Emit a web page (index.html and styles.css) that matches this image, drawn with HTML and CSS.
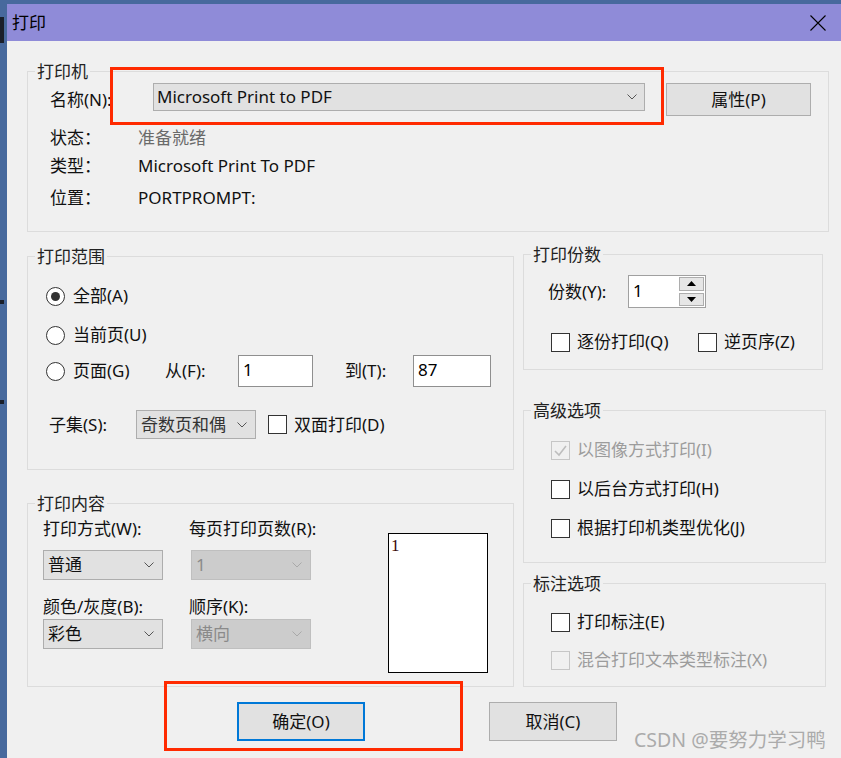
FILE: index.html
```html
<!DOCTYPE html>
<html lang="zh-CN">
<head>
<meta charset="utf-8">
<title>打印</title>
<link rel="stylesheet" href="styles.css">
</head>
<body>
<div class="desktop">
  <div class="dialog">
    <div class="titlebar">
      <span class="title">打印</span>
      <svg class="close" viewBox="0 0 16 16"><path d="M0.5 0.5 L15.5 15.5 M15.5 0.5 L0.5 15.5" stroke="#000" stroke-width="1.1" fill="none"/></svg>
    </div>
    <div class="content">
      <fieldset class="grp grp-printer">
        <legend>打印机</legend>
        <div class="printer-body">
          <div class="name-row">
            <span class="name-label">名称(N):</span>
            <div class="select select-printer">
              <span class="sel-text">Microsoft Print to PDF</span>
              <svg class="chev" viewBox="0 0 10 6"><path d="M0.5 0.5 L5 5 L9.5 0.5" fill="none" stroke="#555" stroke-width="1"/></svg>
            </div>
            <div class="btn btn-props">属性(P)</div>
          </div>
          <div class="info">
            <span>状态：</span><span class="muted">准备就绪</span>
            <span>类型：</span><span>Microsoft Print To PDF</span>
            <span>位置：</span><span>PORTPROMPT:</span>
          </div>
        </div>
      </fieldset>

      <div class="columns">
        <div class="col col-left">
          <fieldset class="grp grp-range">
            <legend>打印范围</legend>
            <div class="range-body">
              <div class="radio-row"><span class="radio on"></span><span>全部(A)</span></div>
              <div class="radio-row row-u"><span class="radio"></span><span>当前页(U)</span></div>
              <div class="radio-row row-g">
                <div class="pg-radio"><span class="radio"></span><span>页面(G)</span></div>
                <span class="lbl-from">从(F):</span>
                <div class="txt txt-from">1</div>
                <span class="lbl-to">到(T):</span>
                <div class="txt txt-to">87</div>
              </div>
              <div class="subset-row">
                <span class="subset-label">子集(S):</span>
                <div class="select select-subset">
                  <span class="sel-text subset-text">奇数页和偶</span>
                  <svg class="chev" viewBox="0 0 10 6"><path d="M0.5 0.5 L5 5 L9.5 0.5" fill="none" stroke="#555" stroke-width="1"/></svg>
                </div>
                <span class="cb cb-duplex"></span>
                <span class="cb-label">双面打印(D)</span>
              </div>
            </div>
          </fieldset>

          <fieldset class="grp grp-content">
            <legend>打印内容</legend>
            <div class="content-body">
              <div class="fields">
                <div class="field">
                  <div class="field-label">打印方式(W):</div>
                  <div class="select select-small">
                    <span class="sel-text">普通</span>
                    <svg class="chev" viewBox="0 0 10 6"><path d="M0.5 0.5 L5 5 L9.5 0.5" fill="none" stroke="#555" stroke-width="1"/></svg>
                  </div>
                </div>
                <div class="field">
                  <div class="field-label col2">每页打印页数(R):</div>
                  <div class="select select-small disabled">
                    <span class="sel-text">1</span>
                    <svg class="chev" viewBox="0 0 10 6"><path d="M0.5 0.5 L5 5 L9.5 0.5" fill="none" stroke="#a9a9a9" stroke-width="1"/></svg>
                  </div>
                </div>
                <div class="field field-2">
                  <div class="field-label">颜色/灰度(B):</div>
                  <div class="select select-small">
                    <span class="sel-text">彩色</span>
                    <svg class="chev" viewBox="0 0 10 6"><path d="M0.5 0.5 L5 5 L9.5 0.5" fill="none" stroke="#555" stroke-width="1"/></svg>
                  </div>
                </div>
                <div class="field field-2">
                  <div class="field-label col2">顺序(K):</div>
                  <div class="select select-small disabled">
                    <span class="sel-text">横向</span>
                    <svg class="chev" viewBox="0 0 10 6"><path d="M0.5 0.5 L5 5 L9.5 0.5" fill="none" stroke="#a9a9a9" stroke-width="1"/></svg>
                  </div>
                </div>
              </div>
              <div class="preview"><span class="preview-num">1</span></div>
            </div>
          </fieldset>
        </div>

        <div class="col col-right">
          <fieldset class="grp grp-copies">
            <legend>打印份数</legend>
            <div class="copies-body">
              <div class="copies-row">
                <span class="copies-label">份数(Y):</span>
                <div class="spin-input">
                  <span class="val">1</span>
                  <div class="spin">
                    <div class="spin-btn"><svg viewBox="0 0 9 5" class="arrow"><path d="M0 5 L4.5 0 L9 5 Z" fill="#000"/></svg></div>
                    <div class="spin-btn"><svg viewBox="0 0 9 5" class="arrow"><path d="M0 0 L4.5 5 L9 0 Z" fill="#000"/></svg></div>
                  </div>
                </div>
              </div>
              <div class="check-row copies-checks">
                <div class="check-item collate"><span class="cb"></span><span class="cb-label">逐份打印(Q)</span></div>
                <div class="check-item"><span class="cb"></span><span class="cb-label">逆页序(Z)</span></div>
              </div>
            </div>
          </fieldset>

          <fieldset class="grp grp-adv">
            <legend>高级选项</legend>
            <div class="opt-body adv-body">
              <div class="check-item dis-item">
                <span class="cb dis"><svg viewBox="0 0 17 17" class="tick"><path d="M3 9 L7 13 L14 4" stroke="#bdbdbd" stroke-width="1.6" fill="none"/></svg></span>
                <span class="cb-label">以图像方式打印(I)</span>
              </div>
              <div class="check-item"><span class="cb"></span><span class="cb-label">以后台方式打印(H)</span></div>
              <div class="check-item"><span class="cb"></span><span class="cb-label">根据打印机类型优化(J)</span></div>
            </div>
          </fieldset>

          <fieldset class="grp grp-anno">
            <legend>标注选项</legend>
            <div class="opt-body anno-body">
              <div class="check-item"><span class="cb"></span><span class="cb-label">打印标注(E)</span></div>
              <div class="check-item dis-item"><span class="cb dis"></span><span class="cb-label">混合打印文本类型标注(X)</span></div>
            </div>
          </fieldset>
        </div>
      </div>

      <div class="buttons">
        <div class="btn btn-dlg btn-ok">确定(O)</div>
        <div class="btn btn-dlg">取消(C)</div>
      </div>

      <div class="mark mark-printer"></div>
      <div class="mark mark-ok"></div>
      <div class="watermark">CSDN @要努力学习鸭</div>
    </div>
  </div>
</div>
</body>
</html>
```

FILE: styles.css
```css
* { box-sizing: border-box; }

html, body {
  margin: 0;
  padding: 0;
}

body {
  width: 841px;
  height: 758px;
  overflow: hidden;
  background: #47699d;
  font-family: "Noto Sans", "Noto Sans CJK SC", sans-serif;
  font-size: 17px;
  line-height: 22px;
  color: #111;
}

.desktop {
  width: 841px;
  height: 758px;
  padding: 4px 0 0 7px;
  background:
    linear-gradient(180deg, transparent 0 17px, #1a1f2a 17px 43px, transparent 43px 300px, #1a1f2a 300px 304px, transparent 304px 400px, #1a1f2a 400px 404px, transparent 404px),
    #47699d;
  background-size: 4px 100%, auto;
  background-repeat: no-repeat;
}

.dialog {
  width: 834px;
  height: 754px;
  background: #f0f0f0;
  display: flex;
  flex-direction: column;
}

.titlebar {
  flex: none;
  height: 37px;
  background: #8f8bd8;
  display: flex;
  align-items: center;
  justify-content: space-between;
  padding: 0 15px 0 5px;
}

.title {
  font-size: 17px;
  line-height: 22px;
  color: #000;
}

.close {
  width: 16px;
  height: 16px;
  display: block;
}

.content {
  position: relative;
  flex: 1;
  padding: 20px 0 0 20px;
}

/* group boxes */
.grp {
  margin: 0;
  padding: 0;
  min-width: 0;
  border: 1px solid #dcdcdc;
}

.grp > legend {
  margin-left: 7px;
  padding: 0 2px;
  font-size: 17px;
  line-height: 21px;
  color: #222;
}

.grp-printer {
  width: 802px;
  height: 171px;
}

.printer-body {
  padding: 1px 0 0 22px;
}

.name-row {
  display: flex;
  align-items: center;
  height: 33px;
}

.name-label {
  width: 103px;
  flex: none;
}

/* selects */
.select {
  display: flex;
  align-items: center;
  justify-content: space-between;
  background: #e1e1e1;
  border: 1px solid #adadad;
  padding: 0 7px 0 3px;
  overflow: hidden;
}

.select.disabled {
  background: #cccccc;
  border-color: #bfbfbf;
  color: #8a8a8a;
}

.chev {
  width: 10px;
  height: 6px;
  flex: none;
  display: block;
}

.select-printer {
  align-self: flex-start;
  width: 492px;
  height: 28px;
}

.sel-text {
  white-space: nowrap;
}

.subset-text {
  color: #333;
}

/* buttons */
.btn {
  display: flex;
  align-items: center;
  justify-content: center;
  background: #e1e1e1;
  border: 1px solid #adadad;
}

.btn-props {
  width: 145px;
  height: 33px;
  margin-left: 21px;
  flex: none;
}

.info {
  display: grid;
  grid-template-columns: 88px auto;
  grid-template-rows: 28px 32px 22px;
  margin-top: 11px;
}

.muted {
  color: #6a6a6a;
}

/* layout columns */
.columns {
  display: flex;
  gap: 9px;
}

.col {
  display: flex;
  flex-direction: column;
}

/* print range */
.grp-range {
  width: 487px;
  height: 224px;
  margin-top: 14px;
}

.range-body {
  padding: 18px 0 0 18px;
}

.radio-row {
  display: flex;
  align-items: center;
  height: 22px;
}

.radio {
  width: 19px;
  height: 19px;
  flex: none;
  border: 1px solid #333;
  border-radius: 50%;
  background: #fff;
  margin-right: 8px;
  display: flex;
  align-items: center;
  justify-content: center;
}

.radio.on::after {
  content: "";
  width: 9px;
  height: 9px;
  border-radius: 50%;
  background: #333;
}

.row-u {
  margin-top: 17px;
}

.row-g {
  height: 32px;
  margin-top: 9px;
}

.pg-radio {
  width: 119px;
  display: flex;
  align-items: center;
  flex: none;
}

.lbl-from {
  width: 73px;
  flex: none;
}

.lbl-to {
  width: 68px;
  margin-left: 32px;
  flex: none;
}

.txt {
  height: 32px;
  background: #fff;
  border: 1px solid #8f8f8f;
  padding-left: 4px;
  line-height: 28px;
  color: #000;
  flex: none;
}

.txt-from {
  width: 75px;
}

.txt-to {
  width: 78px;
}

.subset-row {
  display: flex;
  align-items: center;
  height: 29px;
  margin: 23px 0 0 3px;
}

.subset-label {
  width: 87px;
  flex: none;
}

.select-subset {
  width: 120px;
  height: 29px;
  flex: none;
  padding-left: 4px;
  padding-right: 8px;
}

.cb {
  width: 19px;
  height: 19px;
  flex: none;
  border: 1px solid #333;
  background: #fff;
  display: flex;
  align-items: center;
  justify-content: center;
}

.cb.dis {
  border-color: #c6c6c6;
  background: transparent;
}

.tick {
  width: 17px;
  height: 17px;
  display: block;
}

.cb-duplex {
  margin-left: 12px;
}

.cb-label {
  margin-left: 7px;
  white-space: nowrap;
}

/* print content */
.grp-content {
  width: 487px;
  height: 194px;
  margin-top: 23px;
}

.content-body {
  display: flex;
  align-items: flex-start;
  padding: 4px 0 0 15px;
}

.fields {
  display: grid;
  grid-template-columns: 148px 120px;
}

.field-label {
  height: 22px;
  white-space: nowrap;
}

.field-label.col2 {
  margin-left: -2px;
}

.select-small {
  width: 120px;
  height: 30px;
  margin-top: 10px;
  padding-left: 4px;
  padding-right: 8px;
}

.field-2 .field-label {
  margin-top: 16px;
}

.field-2 .select-small {
  margin-top: 1px;
}

.preview {
  width: 100px;
  height: 140px;
  margin: 15px 0 0 77px;
  background: #fff;
  border: 1px solid #000;
  padding: 3px 0 0 2px;
}

.preview-num {
  display: block;
  font-family: "Liberation Serif", "DejaVu Serif", serif;
  font-size: 17px;
  line-height: 17px;
  color: #3a0a0a;
}

/* copies */
.grp-copies {
  width: 300px;
  height: 126px;
  margin-top: 12px;
}

.copies-body {
  padding: 10px 0 0 24px;
}

.copies-row {
  display: flex;
  align-items: center;
  height: 33px;
}

.copies-label {
  width: 80px;
  flex: none;
}

.spin-input {
  width: 78px;
  height: 33px;
  border: 1px solid #a0a0a0;
  background: #fff;
  display: flex;
}

.spin-input .val {
  flex: 1;
  padding-left: 4px;
  line-height: 29px;
  color: #000;
}

.spin {
  width: 26px;
  display: flex;
  flex-direction: column;
  gap: 2px;
  padding: 1px 1px 1px 0;
}

.spin-btn {
  flex: 1;
  background: #e6e6e6;
  border: 1px solid #adadad;
  display: flex;
  align-items: center;
  justify-content: center;
}

.arrow {
  width: 9px;
  height: 5px;
  display: block;
}

.check-row {
  display: flex;
  align-items: center;
  height: 22px;
}

.copies-checks {
  margin: 23px 0 0 3px;
}

.check-item {
  display: flex;
  align-items: center;
  height: 22px;
}

.check-item.collate {
  width: 147px;
}

.dis-item .cb-label {
  color: #9c9c9c;
}

/* advanced / annotations */
.grp-adv {
  width: 303px;
  height: 163px;
  margin-top: 30px;
}

.opt-body {
  display: flex;
  flex-direction: column;
  padding-left: 27px;
}

.adv-body {
  padding-top: 18px;
  gap: 17px;
}

.grp-anno {
  width: 303px;
  height: 114px;
  margin-top: 10px;
}

.anno-body {
  padding-top: 17px;
  gap: 16px;
}

/* dialog buttons */
.buttons {
  display: flex;
  gap: 124px;
  margin: 15px 0 0 210px;
}

.btn-dlg {
  width: 128px;
  height: 39px;
}

.btn-ok {
  border: 2px solid #0078d7;
}

/* annotation overlays */
.mark {
  position: absolute;
  border: 3px solid #ff2a00;
  pointer-events: none;
}

.mark-printer {
  left: 103px;
  top: 26px;
  width: 554px;
  height: 58px;
}

.mark-ok {
  left: 157px;
  top: 640px;
  width: 299px;
  height: 70px;
}

.watermark {
  position: absolute;
  left: 627px;
  top: 688px;
  font-size: 19.5px;
  line-height: 22px;
  color: #ababab;
  white-space: nowrap;
}
```
